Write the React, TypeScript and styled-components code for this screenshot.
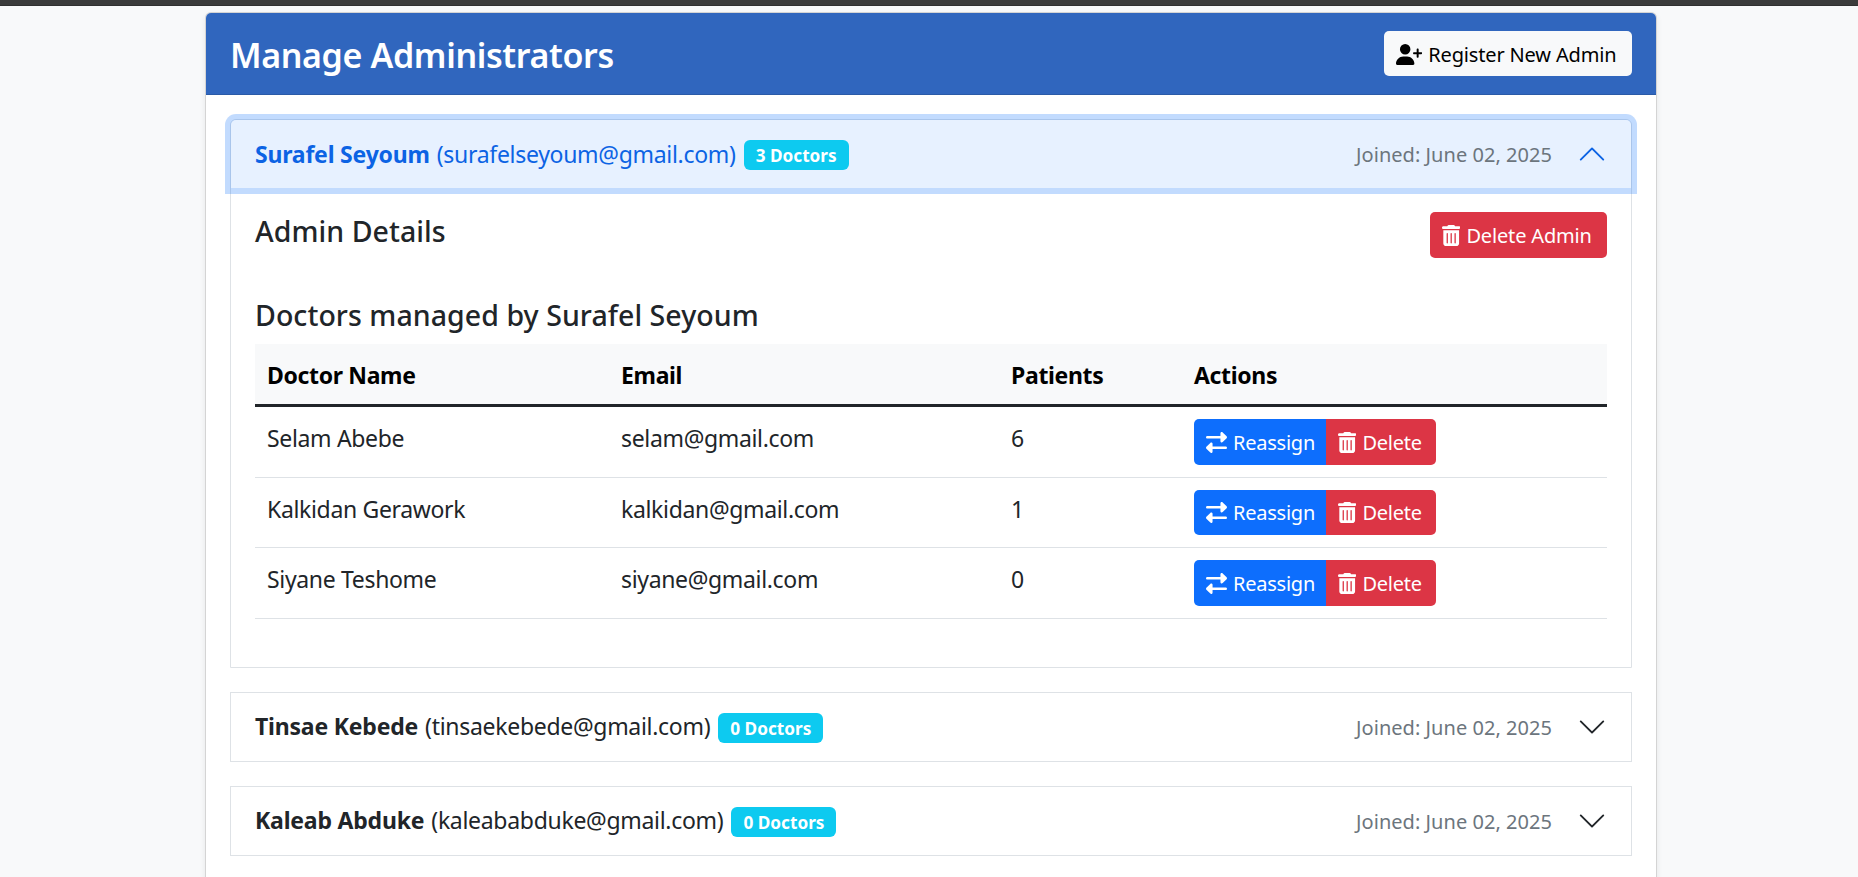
import React from 'react';
import styled, { createGlobalStyle, css } from 'styled-components';
import { FaRightLeft, FaTrashCan, FaUserPlus } from 'react-icons/fa6';

const GlobalStyle = createGlobalStyle`
  *, *::before, *::after { box-sizing: border-box; }
  html, body { margin: 0; height: 100%; overflow: hidden; }
  body {
    background: #f8f9fa;
    color: #212529;
    font-family: "Segoe UI", "Noto Sans", "Open Sans", sans-serif;
    font-size: 23px;
    line-height: 36px;
    letter-spacing: -0.34px;
  }
`;

const Page = styled.div`
  height: 877px;
  overflow: hidden;
`;

const TopBar = styled.div`
  height: 6px;
  background: #3b3b3b;
  border-bottom: 1px solid #303030;
`;

const Card = styled.main`
  width: 1452px;
  height: 1100px;
  margin: 6px 0 0 205px;
  background: #fff;
  border: 1px solid rgba(0, 0, 0, 0.17);
  border-radius: 6px;
  box-shadow: 0 3px 6px rgba(0, 0, 0, 0.075);
`;

const CardHeader = styled.header`
  display: flex;
  align-items: center;
  justify-content: space-between;
  height: 82px;
  padding: 0 24px;
  background: #3066be;
  border-bottom: 1px solid #2a5aa7;
  border-radius: 5px 5px 0 0;
`;

const Title = styled.h4`
  margin: 0;
  padding-top: 3px;
  color: #fff;
  font-size: 34px;
  font-weight: 600;
  line-height: 43px;
  letter-spacing: -0.37px;
`;

const tones = {
  light: css`background: #f8f9fa; color: #000;`,
  primary: css`background: #0d6efd; color: #fff;`,
  danger: css`background: #dc3545; color: #fff;`,
};

const Button = styled.button<{ $tone: keyof typeof tones; $width: number; $icon: number }>`
  display: flex;
  align-items: center;
  gap: 6px;
  width: ${(p) => p.$width}px;
  height: 45.5px;
  padding: 1px 0 0 12px;
  border: 0;
  border-radius: 5px;
  font: inherit;
  font-size: 20px;
  line-height: 31px;
  letter-spacing: -0.16px;
  white-space: nowrap;
  ${(p) => tones[p.$tone]}
  svg { flex: none; height: 21px; width: ${(p) => p.$icon}px; }
`;

const ButtonGroup = styled.div`
  display: flex;
  ${Button} { letter-spacing: -0.24px; }
  ${Button}:first-child { border-radius: 5px 0 0 5px; }
  ${Button}:last-child { border-radius: 0 5px 5px 0; }
`;

const Accordion = styled.section`
  display: flex;
  flex-direction: column;
  gap: 24px;
  padding: 24px;
`;

const Item = styled.article<{ $first?: boolean }>`
  border: 1px solid #dee2e6;
  border-radius: ${(p) => (p.$first ? '6px 6px 0 0' : '0')};
`;

const ItemHeader = styled.div<{ $open?: boolean }>`
  display: flex;
  align-items: center;
  height: 68px;
  padding: 0 24px;
  ${(p) =>
    p.$open &&
    css`
      background: #e7f1ff;
      color: #0c63e4;
      border-radius: 5px 5px 0 0;
      box-shadow: 0 0 0 6px rgba(13, 110, 253, 0.25);
    `}
`;

const Identity = styled.div`
  flex: 1;
  display: flex;
  align-items: center;
  padding-bottom: 1px;
  letter-spacing: -0.3px;
  white-space: nowrap;
`;

const Name = styled.strong`
  margin-right: 7px;
  font-weight: 700;
  letter-spacing: -0.2px;
`;

const Badge = styled.span`
  height: 30px;
  margin: 3px 0 0 8px;
  padding: 0 12px;
  border-radius: 6px;
  background: #0dcaf0;
  color: #fff;
  font-size: 17.2px;
  font-weight: 700;
  line-height: 31px;
  letter-spacing: 0;
`;

const Joined = styled.small`
  margin-right: 25px;
  padding-top: 2px;
  color: #6c757d;
  font-size: 20px;
  letter-spacing: 0.04px;
`;

const Chevron = styled.svg<{ $open?: boolean }>`
  width: 30px;
  height: 30px;
  transform: ${(p) => (p.$open ? 'rotate(180deg)' : 'none')};
`;

const ItemBody = styled.div`
  padding: 24px;
`;

const DetailsRow = styled.div`
  display: flex;
  align-items: flex-start;
  justify-content: space-between;
  height: 84px;
`;

const Heading = styled.h5`
  margin: 0 0 12px;
  font-size: 28.5px;
  font-weight: 500;
  line-height: 38px;
  height: 36px;
  letter-spacing: 0.06px;
`;

const Table = styled.table`
  width: 100%;
  margin-bottom: 24px;
  border-collapse: separate;
  border-spacing: 0;
  table-layout: fixed;
`;

const HeadCell = styled.th<{ $width?: number }>`
  width: ${(p) => (p.$width ? `${p.$width}px` : 'auto')};
  height: 63px;
  padding: 2px 12px 0;
  background: #f8f9fa;
  border-bottom: 3px solid #212529;
  color: #000;
  font-weight: 700;
  text-align: left;
`;

const Cell = styled.td<{ $actions?: boolean }>`
  height: 70.5px;
  padding: ${(p) => (p.$actions ? '12px 12px 0' : '13px 12px 0')};
  border-bottom: 1px solid #dee2e6;
  vertical-align: top;
`;

interface Admin { name: string; email: string; doctors: number; joined: string }
interface Doctor { name: string; email: string; patients: number }

const admins: Admin[] = [
  { name: 'Surafel Seyoum', email: 'surafelseyoum@gmail.com', doctors: 3, joined: 'June 02, 2025' },
  { name: 'Tinsae Kebede', email: 'tinsaekebede@gmail.com', doctors: 0, joined: 'June 02, 2025' },
  { name: 'Kaleab Abduke', email: 'kaleababduke@gmail.com', doctors: 0, joined: 'June 02, 2025' },
];

const doctors: Doctor[] = [
  { name: 'Selam Abebe', email: 'selam@gmail.com', patients: 6 },
  { name: 'Kalkidan Gerawork', email: 'kalkidan@gmail.com', patients: 1 },
  { name: 'Siyane Teshome', email: 'siyane@gmail.com', patients: 0 },
];

const DoctorTable = () => (
  <Table>
    <thead>
      <tr>
        <HeadCell $width={354}>Doctor Name</HeadCell>
        <HeadCell $width={390}>Email</HeadCell>
        <HeadCell $width={183}>Patients</HeadCell>
        <HeadCell>Actions</HeadCell>
      </tr>
    </thead>
    <tbody>
      {doctors.map((d) => (
        <tr key={d.email}>
          <Cell>{d.name}</Cell>
          <Cell>{d.email}</Cell>
          <Cell>{d.patients}</Cell>
          <Cell $actions>
            <ButtonGroup>
              <Button $tone="primary" $width={132} $icon={21}><FaRightLeft />Reassign</Button>
              <Button $tone="danger" $width={110} $icon={18.4}><FaTrashCan />Delete</Button>
            </ButtonGroup>
          </Cell>
        </tr>
      ))}
    </tbody>
  </Table>
);

const AdminItem = ({ admin, open }: { admin: Admin; open?: boolean }) => (
  <Item $first={open}>
    <ItemHeader $open={open}>
      <Identity>
        <Name>{admin.name}</Name>
        <span>({admin.email})</span>
        <Badge>{admin.doctors} Doctors</Badge>
      </Identity>
      <Joined>Joined: {admin.joined}</Joined>
      <Chevron $open={open} viewBox="0 0 16 16" fill={open ? '#0c63e4' : '#212529'}>
        <path fillRule="evenodd" d="M1.646 4.646a.5.5 0 0 1 .708 0L8 10.293l5.646-5.647a.5.5 0 0 1 .708.708l-6 6a.5.5 0 0 1-.708 0l-6-6a.5.5 0 0 1 0-.708z" />
      </Chevron>
    </ItemHeader>
    {open && (
      <ItemBody>
        <DetailsRow>
          <Heading>Admin Details</Heading>
          <Button $tone="danger" $width={177} $icon={18.4}><FaTrashCan />Delete Admin</Button>
        </DetailsRow>
        <Heading>Doctors managed by {admin.name}</Heading>
        <DoctorTable />
      </ItemBody>
    )}
  </Item>
);

export default function App() {
  return (
    <Page>
      <GlobalStyle />
      <TopBar />
      <Card>
        <CardHeader>
          <Title>Manage Administrators</Title>
          <Button $tone="light" $width={248} $icon={26.25}><FaUserPlus />Register New Admin</Button>
        </CardHeader>
        <Accordion>
          {admins.map((a, i) => (
            <AdminItem key={a.email} admin={a} open={i === 0} />
          ))}
        </Accordion>
      </Card>
    </Page>
  );
}
